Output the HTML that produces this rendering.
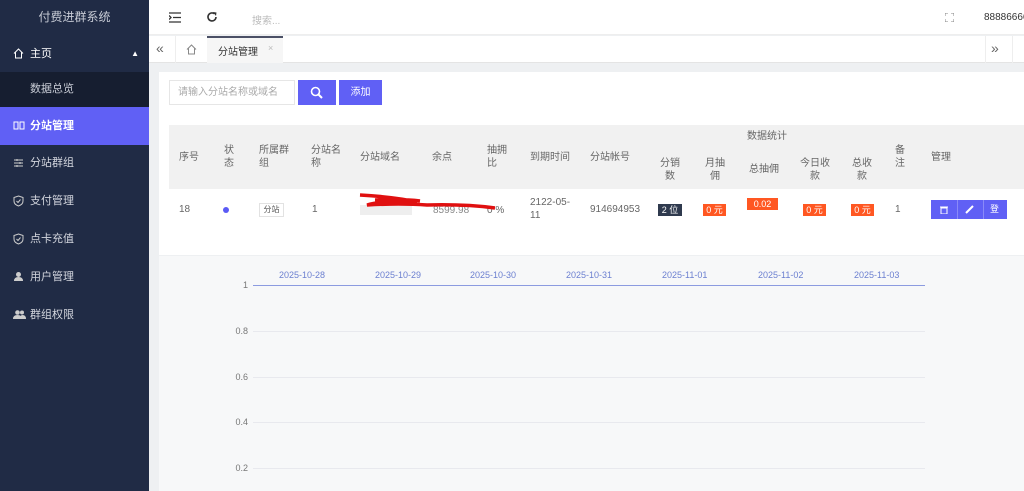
<!DOCTYPE html>
<html><head><meta charset="utf-8"><style>
*{margin:0;padding:0;box-sizing:border-box}
body{width:1024px;height:491px;overflow:hidden;font-family:"Liberation Sans","Noto Sans CJK SC",sans-serif;font-size:11px;color:#555;background:#eef0f2;position:relative}
.sb{position:absolute;left:0;top:0;width:149px;height:491px;background:#202b45;color:#d3d6de}
.sb .t{height:35px;line-height:35px;text-align:center;font-size:12px;color:#c8ccd6}
.sb .it{position:absolute;left:0;width:149px;height:38px;line-height:38px;padding-left:30px;font-size:11px}
.sb .ic{position:absolute;left:13px;top:13px}
.a{position:absolute}
.hdr{position:absolute;left:149px;top:0;right:0;height:35px;background:#fff;border-bottom:1px solid #eee}
.tabs{position:absolute;left:149px;top:36px;right:0;height:27px;background:#fff;border-bottom:1px solid #e4e4e4}
.card{position:absolute;left:159px;top:72px;right:0;height:183px;background:#fff}
.chart{position:absolute;left:159px;top:256px;right:0;bottom:0;background:#f7f8f9}
.th{position:absolute;top:125px;height:64px;left:169px;right:0;background:#f1f1f1}
.c{position:absolute;font-size:10px;color:#666;line-height:13px}
.badge{position:absolute;color:#fff;font-size:9px;line-height:12px;height:12px;text-align:center}
.gl{position:absolute;left:253px;width:672px;height:1px;background:#e8e9ee}
.yl{position:absolute;left:230px;width:18px;text-align:right;font-size:9px;color:#777}
.xl{position:absolute;top:270px;font-size:9px;color:#6b7fd0}
</style></head><body>
<div class="sb">
<div class="t">付费进群系统</div>
<div class="it" style="top:35px;color:#fff"><svg class="ic" width="11" height="11" viewBox="0 0 11 11"><path d="M1 5.5L5.5 1L10 5.5M2.5 4.5V10H8.5V4.5" stroke="#fff" fill="none"/></svg>主页<span style="position:absolute;right:10px;font-size:8px">▲</span></div>
<div class="it" style="top:72px;height:35px;line-height:35px;background:#161e30;color:#c9cdd6">数据总览</div>
<div class="it" style="top:107px;background:#6060f5;color:#fff;font-weight:bold"><svg class="ic" width="12" height="11" viewBox="0 0 12 11"><path d="M1 2H5V9H1ZM7 2H11V9H7Z" stroke="#fff" fill="none"/></svg>分站管理</div>
<div class="it" style="top:144px"><svg class="ic" width="11" height="11"><path d="M1 3H10M1 6H10M1 9H10M4 2V4M7 5V7M4 8V10" stroke="#ccc"/></svg>分站群组</div>
<div class="it" style="top:182px"><svg class="ic" width="11" height="12"><path d="M5.5 1L10 2.5V6Q10 9.5 5.5 11Q1 9.5 1 6V2.5Z M3.5 6L5 7.5L7.5 4.5" stroke="#ccc" fill="none"/></svg>支付管理</div>
<div class="it" style="top:220px"><svg class="ic" width="11" height="12"><path d="M5.5 1L10 2.5V6Q10 9.5 5.5 11Q1 9.5 1 6V2.5Z M3.5 6L5 7.5L7.5 4.5" stroke="#ccc" fill="none"/></svg>点卡充值</div>
<div class="it" style="top:258px"><svg class="ic" width="11" height="11"><circle cx="5.5" cy="3.5" r="2.5" fill="#ccc"/><path d="M1 10Q1 6 5.5 6Q10 6 10 10Z" fill="#ccc"/></svg>用户管理</div>
<div class="it" style="top:296px"><svg class="ic" width="13" height="11"><circle cx="4.5" cy="3.5" r="2.3" fill="#ccc"/><circle cx="9" cy="3.5" r="2" fill="#ccc"/><path d="M0 10Q0 6 4.5 6Q9 6 9 10Z M6 10Q7 6 9.5 6Q13 6 13 10Z" fill="#ccc"/></svg>群组权限</div>
</div>
<div class="hdr">
<svg class="a" style="left:20px;top:12px" width="12" height="11"><path d="M0 1H12M4 5.5H12M0 10H12M0 3.5L2 5.5L0 7.5" stroke="#333" stroke-width="1.3" fill="none"/></svg>
<svg class="a" style="left:57px;top:11px" width="12" height="12"><path d="M10 6A4 4 0 1 1 8.5 2.8" stroke="#333" stroke-width="1.6" fill="none"/><path d="M7 1L10.5 1.5L10 5Z" fill="#333"/></svg>
<span class="a" style="left:103px;top:12px;color:#bbb;font-size:10px">搜索...</span>
<svg class="a" style="left:796px;top:13px" width="9" height="9"><path d="M0 3V0H3M6 0H9V3M9 6V9H6M3 9H0V6" stroke="#888" fill="none"/></svg>
<span class="a" style="left:835px;top:12px;color:#333;font-size:10px">88886666</span>
</div>
<div class="tabs">
<span class="a" style="left:7px;top:4px;font-size:14px;color:#666">«</span>
<div class="a" style="left:26px;top:0;width:1px;height:27px;background:#eee"></div>
<svg class="a" style="left:37px;top:8px" width="11" height="11"><path d="M1 5.5L5.5 1L10 5.5M2.5 4.5V10H8.5V4.5" stroke="#888" fill="none"/></svg>
<div class="a" style="left:58px;top:0;width:76px;height:27px;background:#f6f6f6;border-top:2px solid #4b5066"></div>
<span class="a" style="left:69px;top:7px;font-size:10px;color:#333">分站管理</span>
<span class="a" style="left:119px;top:7px;font-size:9px;color:#bbb">×</span>
<div class="a" style="left:836px;top:0;width:1px;height:27px;background:#eee"></div>
<span class="a" style="left:842px;top:4px;font-size:14px;color:#666">»</span>
<div class="a" style="left:863px;top:0;width:1px;height:27px;background:#eee"></div>
</div>
<div class="card"></div>
<div class="a" style="left:169px;top:80px;width:126px;height:25px;border:1px solid #e6e6e6;background:#fff;color:#aaa;font-size:10px;line-height:23px;padding-left:8px">请输入分站名称或域名</div>
<div class="a" style="left:298px;top:80px;width:38px;height:25px;background:#6060f5"><svg class="a" style="left:12px;top:6px" width="14" height="14"><circle cx="5.5" cy="5.5" r="4" stroke="#fff" stroke-width="1.6" fill="none"/><path d="M8.5 8.5L12 12" stroke="#fff" stroke-width="2"/></svg></div>
<div class="a" style="left:339px;top:80px;width:43px;height:25px;background:#6060f5;color:#fff;text-align:center;line-height:25px;font-size:10px">添加</div>
<div class="th"></div>
<div class="c" style="left:179px;top:151px">序号</div>
<div class="c" style="left:224px;top:144px">状<br>态</div>
<div class="c" style="left:259px;top:144px">所属群<br>组</div>
<div class="c" style="left:311px;top:144px">分站名<br>称</div>
<div class="c" style="left:360px;top:151px">分站域名</div>
<div class="c" style="left:432px;top:151px">余点</div>
<div class="c" style="left:487px;top:144px">抽拥<br>比</div>
<div class="c" style="left:530px;top:151px">到期时间</div>
<div class="c" style="left:590px;top:151px">分站帐号</div>
<div class="c" style="left:747px;top:130px">数据统计</div>
<div class="c" style="left:660px;top:157px;text-align:center">分销<br>数</div>
<div class="c" style="left:705px;top:157px;text-align:center">月抽<br>佣</div>
<div class="c" style="left:749px;top:163px">总抽佣</div>
<div class="c" style="left:800px;top:157px;text-align:center">今日收<br>款</div>
<div class="c" style="left:852px;top:157px;text-align:center">总收<br>款</div>
<div class="c" style="left:895px;top:144px">备<br>注</div>
<div class="c" style="left:931px;top:151px">管理</div>
<div class="c" style="left:179px;top:203px">18</div>
<div class="a" style="left:223px;top:207px;width:6px;height:6px;border-radius:50%;background:#5a5af5"></div>
<div class="a" style="left:259px;top:203px;width:25px;height:14px;border:1px solid #e2e2e2;font-size:8px;text-align:center;line-height:12px;color:#555">分站</div>
<div class="c" style="left:312px;top:203px">1</div>
<div class="a" style="left:360px;top:205px;width:52px;height:10px;background:#eee"></div>
<div class="c" style="left:433px;top:204px;color:#888">8599.98</div>
<div class="c" style="left:487px;top:204px">0 %</div>
<svg class="a" style="left:355px;top:190px" width="145" height="25"><path d="M5 5 Q40 7 62 12 Q30 10 12 15 Q45 13 72 15 Q110 14 140 18 M20 10 Q50 9 65 11" stroke="#e01010" stroke-width="3.5" fill="none"/></svg>
<div class="c" style="left:530px;top:196px">2122-05-<br>11</div>
<div class="c" style="left:590px;top:203px">914694953</div>
<div class="badge" style="left:658px;top:204px;width:24px;background:#2f3a4e">2 位</div>
<div class="badge" style="left:703px;top:204px;width:23px;background:#ff5722">0 元</div>
<div class="badge" style="left:747px;top:198px;width:31px;background:#ff5722">0.02</div>
<div class="badge" style="left:803px;top:204px;width:23px;background:#ff5722">0 元</div>
<div class="badge" style="left:851px;top:204px;width:23px;background:#ff5722">0 元</div>
<div class="c" style="left:895px;top:203px">1</div>
<div class="a" style="left:931px;top:200px;width:76px;height:19px;background:#6060f5;color:#fff;font-size:9px;line-height:19px">
<svg class="a" style="left:9px;top:6px" width="8" height="8"><path d="M0 1H8M1 2H7V8H1Z" stroke="#fff" fill="none"/></svg><span class="a" style="left:26px;top:0;width:1px;height:19px;background:#8a8af8"></span><svg class="a" style="left:34px;top:5px" width="9" height="9"><path d="M1 8L8 1" stroke="#fff" stroke-width="2"/></svg><span class="a" style="left:52px;top:0;width:1px;height:19px;background:#8a8af8"></span><span class="a" style="left:59px">登</span></div>
<div class="chart"></div>
<div class="a" style="left:253px;top:285px;width:672px;height:1px;background:#8c9be0"></div>
<div class="gl" style="top:331px"></div><div class="gl" style="top:377px"></div><div class="gl" style="top:422px"></div><div class="gl" style="top:468px"></div>
<div class="yl" style="top:280px">1</div><div class="yl" style="top:326px">0.8</div><div class="yl" style="top:372px">0.6</div><div class="yl" style="top:417px">0.4</div><div class="yl" style="top:463px">0.2</div>
<div class="xl" style="left:279px">2025-10-28</div><div class="xl" style="left:375px">2025-10-29</div><div class="xl" style="left:470px">2025-10-30</div><div class="xl" style="left:566px">2025-10-31</div><div class="xl" style="left:662px">2025-11-01</div><div class="xl" style="left:758px">2025-11-02</div><div class="xl" style="left:854px">2025-11-03</div>
</body></html>
